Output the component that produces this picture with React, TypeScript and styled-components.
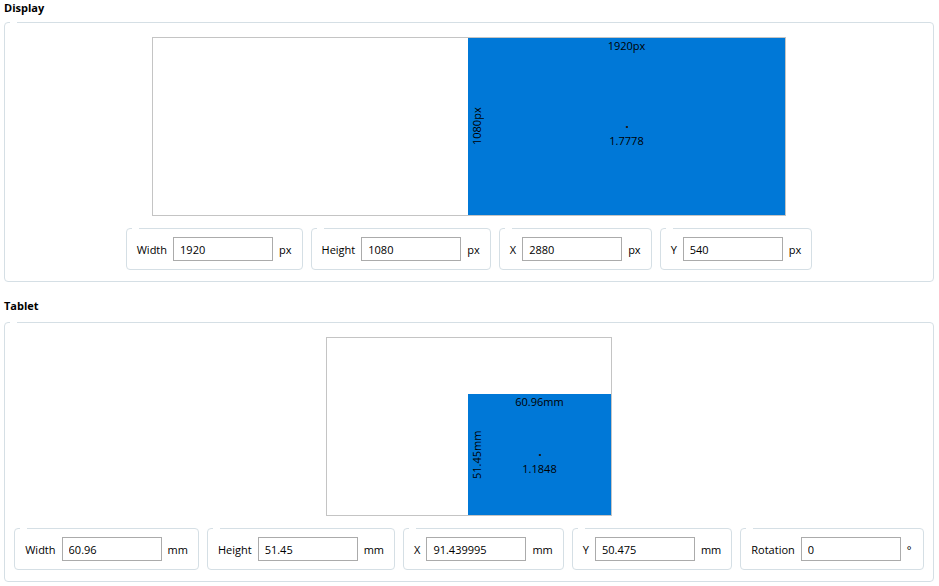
import React from "react";
import styled, { createGlobalStyle } from "styled-components";

const GlobalStyle = createGlobalStyle`
  html, body {
    margin: 0;
    padding: 0;
    background: #ffffff;
  }
  body {
    font-family: "Segoe UI", "Open Sans", "Liberation Sans", sans-serif;
    font-size: 11px;
    color: #000;
  }
`;

type Area = { left: number; top: number; width: number; height: number };

type Field = { label: string; value: string; unit: string };

const displayFields: Field[] = [
  { label: "Width", value: "1920", unit: "px" },
  { label: "Height", value: "1080", unit: "px" },
  { label: "X", value: "2880", unit: "px" },
  { label: "Y", value: "540", unit: "px" },
];

const tabletFields: Field[] = [
  { label: "Width", value: "60.96", unit: "mm" },
  { label: "Height", value: "51.45", unit: "mm" },
  { label: "X", value: "91.439995", unit: "mm" },
  { label: "Y", value: "50.475", unit: "mm" },
  { label: "Rotation", value: "0", unit: "°" },
];

/** preview canvas with the mapped area drawn in blue */
const AreaPreview = ({ width, area, top, side, ratio }: {
  width: number; area: Area; top: string; side: string; ratio: string;
}) => (
  <Preview $width={width}>
    <MappedArea $area={area}>
      <TopLabel>{top}</TopLabel>
      <SideLabel>{side}</SideLabel>
      <CenterMark>
        <Dot />
        <span>{ratio}</span>
      </CenterMark>
    </MappedArea>
  </Preview>
);

const FieldRow = ({ fields }: { fields: Field[] }) => (
  <Row>
    {fields.map((f) => (
      <FieldBox key={f.label}>
        <FieldLabel>{f.label}</FieldLabel>
        <ValueInput defaultValue={f.value} />
        <Unit>{f.unit}</Unit>
      </FieldBox>
    ))}
  </Row>
);

const App = () => {
  return <Page>
    <GlobalStyle />
    <Section>
      <Title>Display</Title>
      <GroupBox>
        <AreaPreview
          width={634}
          area={{ left: 315, top: 0, width: 317, height: 177 }}
          top="1920px"
          side="1080px"
          ratio="1.7778"
        />
        <FieldRow fields={displayFields} />
      </GroupBox>
    </Section>
    <Section>
      <Title $lift>Tablet</Title>
      <GroupBox>
        <AreaPreview
          width={286}
          area={{ left: 141, top: 56, width: 143, height: 121 }}
          top="60.96mm"
          side="51.45mm"
          ratio="1.1848"
        />
        <FieldRow fields={tabletFields} />
      </GroupBox>
    </Section>
  </Page>
}

export default App;

const Page = styled.div`
  display: flex;
  flex-direction: column;
  gap: 18px;
  padding: 0 5px 0 4px;
`

const Section = styled.section`
  display: flex;
  flex-direction: column;
`

const Title = styled.div<{ $lift?: boolean }>`
  height: ${(p) => (p.$lift ? 20 : 22)}px;
  margin-top: ${(p) => (p.$lift ? -2 : 0)}px;
  padding-bottom: ${(p) => (p.$lift ? 4 : 0)}px;
  line-height: 16px;
  font-size: 11px;
  font-weight: 700;
`

// WPF style group frame, with the little notch in the top edge
const Frame = styled.div`
  position: relative;
  border: 1px solid #d5dfe5;
  border-radius: 4px;
  background: #fff;

  &::before {
    content: '';
    position: absolute;
    top: -1px;
    left: 5px;
    width: 7px;
    height: 1px;
    background: #fff;
  }
`

const GroupBox = styled(Frame)`
  display: flex;
  flex-direction: column;
  align-items: center;
  gap: 12px;
  padding: 14px 11px 11px;
`

const Preview = styled.div<{ $width: number }>`
  position: relative;
  box-sizing: border-box;
  width: ${(p) => p.$width}px;
  height: 179px;
  border: 1px solid #c4c4c4;
  background: #fff;
`

const MappedArea = styled.div<{ $area: Area }>`
  position: absolute;
  left: ${(p) => p.$area.left}px;
  top: ${(p) => p.$area.top}px;
  width: ${(p) => p.$area.width}px;
  height: ${(p) => p.$area.height}px;
  background: #0078d7;
  color: #000;
  line-height: 16px;
`

const TopLabel = styled.div`
  position: absolute;
  top: 0;
  left: 0;
  right: 0;
  text-align: center;
`

const SideLabel = styled.div`
  position: absolute;
  top: 0;
  bottom: 0;
  left: 1px;
  display: flex;
  align-items: center;
  justify-content: center;
  writing-mode: vertical-rl;
  transform: rotate(180deg);
`

const CenterMark = styled.div`
  position: absolute;
  top: 50%;
  left: 50%;
  transform: translate(-50%, -1px);
  display: flex;
  flex-direction: column;
  align-items: center;
  gap: 5px;
`

const Dot = styled.div`
  width: 2px;
  height: 2px;
  background: #1a1a1a;
`

const Row = styled.div`
  display: flex;
  justify-content: center;
  gap: 8px;
`

const FieldBox = styled(Frame)`
  display: flex;
  align-items: center;
  gap: 6px;
  box-sizing: border-box;
  height: 42px;
  padding: 0 10px;
`

const FieldLabel = styled.span`
  white-space: nowrap;
`

const ValueInput = styled.input`
  box-sizing: border-box;
  width: 100px;
  height: 24px;
  padding: 0 6px;
  border: 1px solid #ababab;
  border-radius: 0;
  outline: none;
  font-family: inherit;
  font-size: 11px;
  color: #000;
  background: #fff;
`

const Unit = styled.span`
  min-width: 6px;
  white-space: nowrap;
`
